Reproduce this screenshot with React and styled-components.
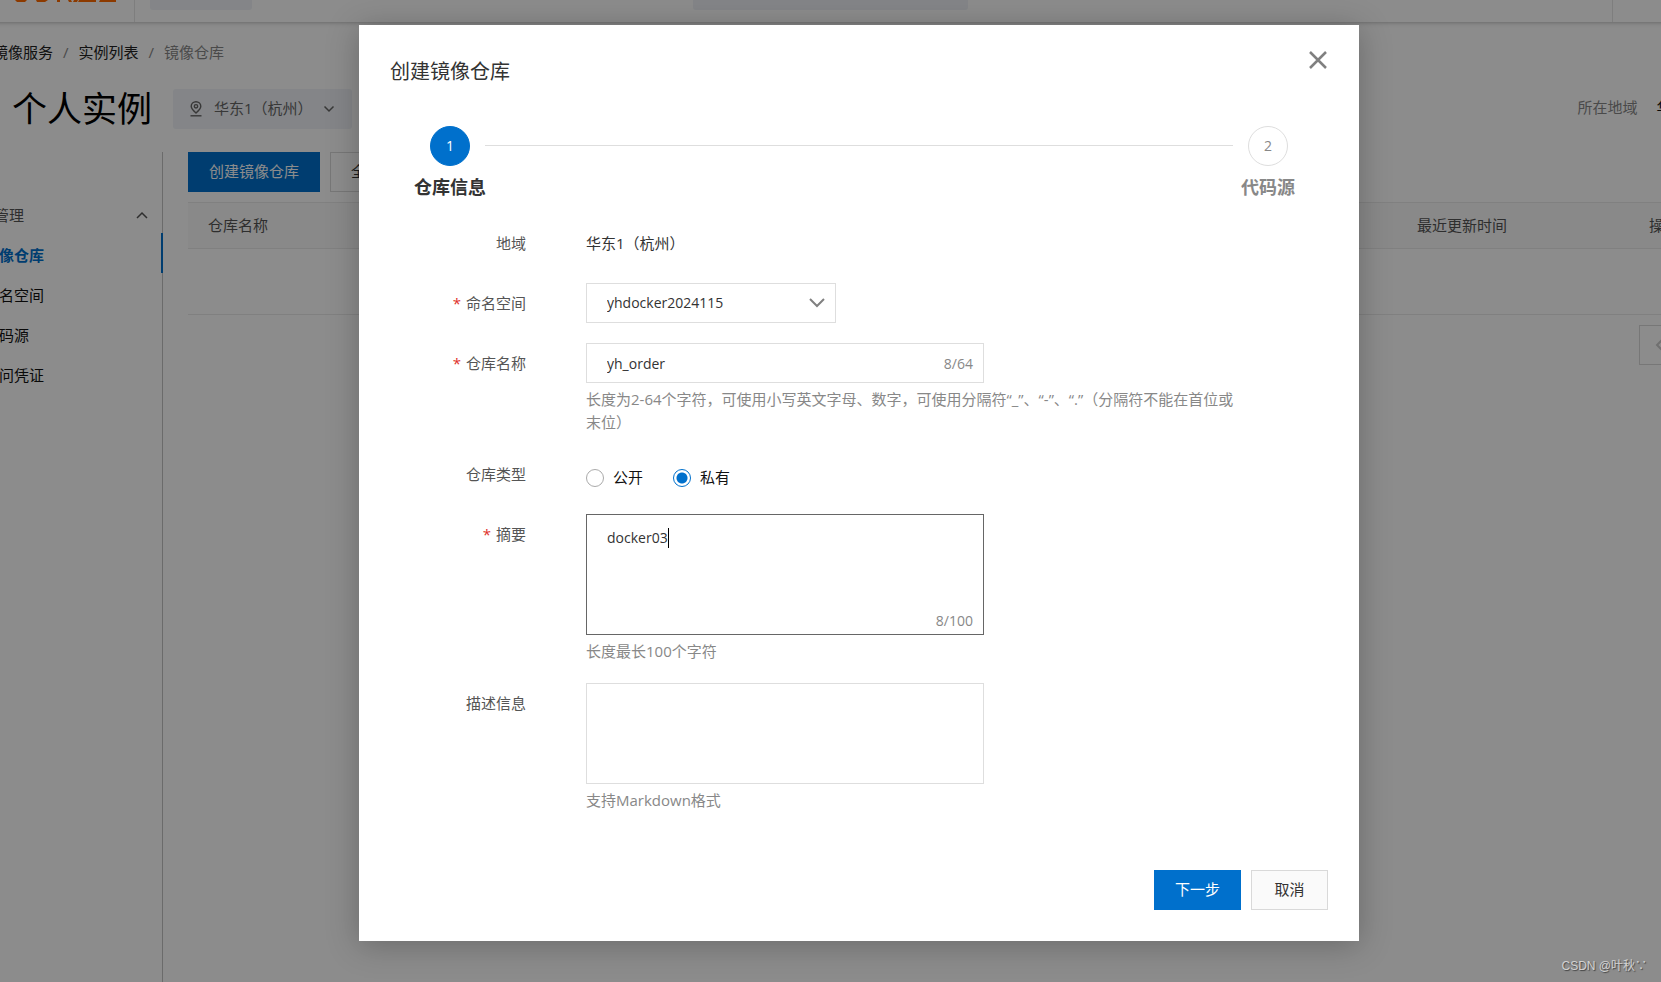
import React, { useState } from "react";
import styled, { createGlobalStyle, css } from "styled-components";

const GlobalStyle = createGlobalStyle`
  * {
    box-sizing: border-box;
  }
  body {
    margin: 0;
    overflow: hidden;
    background: #fff;
    color: #333;
    font-family: "Open Sans", "Noto Sans CJK SC", sans-serif;
    font-size: 15px;
    line-height: 23px;
    text-spacing-trim: space-all;
  }
  button, input, select, textarea {
    font: inherit;
    color: inherit;
  }
`;

/* console page */

const Viewport = styled.div`
  height: 100vh;
  overflow: hidden;
`;

// the console is wider than the window and is scrolled a little to the right
const Shell = styled.div`
  position: relative;
  display: flex;
  flex-direction: column;
  width: calc(100% + 171px);
  height: 100%;
  margin-left: -57px;
`;

const TopBar = styled.header`
  display: flex;
  flex: none;
  height: 22px;
  padding-left: 70px;
  box-shadow: 0 1px 4px rgba(0, 0, 0, 0.25);
`;

const Logo = styled.a`
  width: 122px;
  border-right: 1px solid #e6e6e6;
  svg {
    display: block;
  }
`;

const TopBox = styled.div`
  width: ${props => props.$width};
  height: 10px;
  margin-left: ${props => props.$left};
  border-radius: 0 0 3px 3px;
  background: #f0f3f7;
`;

const TopTools = styled.div`
  width: 163px;
  margin-left: auto;
  border-left: 1px solid #e6e6e6;
`;

const Breadcrumb = styled.nav`
  display: flex;
  flex: none;
  gap: 10px;
  margin-top: 19px;
  padding-left: 20px;
  color: #888;
  a {
    color: #222;
    text-decoration: none;
  }
`;

const TitleRow = styled.div`
  display: flex;
  flex: none;
  align-items: center;
  height: 40px;
  margin: 25px 20px 23px 69px;
`;

const PageTitle = styled.h1`
  margin: 0;
  color: #000;
  font-size: 35px;
  font-weight: 400;
  line-height: 40px;
`;

const RegionPicker = styled.label`
  display: flex;
  align-items: center;
  gap: 12px;
  width: 179px;
  height: 40px;
  margin-left: 21px;
  padding: 0 17px;
  border-radius: 3px;
  background: #f0f3f7;
  color: #666;
`;

const BareSelect = styled.select`
  flex: 1;
  min-width: 0;
  height: 100%;
  padding: 0 0 2px;
  border: 0;
  outline: 0;
  appearance: none;
  background: transparent;
`;

const RegionInfo = styled.dl`
  display: flex;
  gap: 19px;
  margin: 0 0 0 auto;
  padding-bottom: 4px;
  dt {
    color: #888;
  }
  dd {
    margin: 0;
    color: #111;
  }
`;

const Columns = styled.div`
  display: flex;
  flex: 1;
`;

const SideNav = styled.nav`
  flex: none;
  width: 220px;
  padding-top: 41px;
  border-right: 1px solid #c4c4c4;
`;

const NavGroup = styled.button`
  display: flex;
  align-items: center;
  justify-content: space-between;
  width: 100%;
  height: 40px;
  padding: 4px 14px 0 21px;
  border: 0;
  background: none;
  color: #555;
`;

const NavItem = styled.a`
  display: block;
  height: 40px;
  margin-right: -1px;
  padding: 11px 0 0 41px;
  color: #111;
  text-decoration: none;
  ${props => props.$active && css`
    border-right: 2px solid #0070cc;
    color: #0070cc;
    font-weight: 600;
  `}
`;

const Main = styled.main`
  flex: 1;
  padding: 0 20px 0 25px;
`;

const Toolbar = styled.div`
  display: flex;
  gap: 10px;
  margin-bottom: 10px;
`;

const Button = styled.button`
  min-width: 77px;
  height: 40px;
  padding: 0 20px 2px;
  border: 1px solid ${props => (props.$primary ? "#0070cc" : "#d9d9d9")};
  background: ${props => (props.$primary ? "#0070cc" : props.$fill || "#fff")};
  color: ${props => (props.$primary ? "#fff" : "#333")};
  white-space: nowrap;
`;

const RepoTable = styled.table`
  width: 100%;
  border-collapse: collapse;
  table-layout: fixed;
  th {
    height: 46px;
    padding: 0 20px;
    border: solid #e9e9e9;
    border-width: 1px 0;
    background: #f9f9f9;
    color: #555;
    font-weight: 400;
    text-align: left;
  }
  th:nth-last-child(2) {
    width: 232px;
  }
  th:last-child {
    width: 126px;
  }
  td {
    height: 66px;
    border-bottom: 1px solid #e9e9e9;
  }
`;

const Pager = styled.div`
  display: flex;
  justify-content: flex-end;
  margin-top: 10px;
`;

const PagerButton = styled.button`
  display: flex;
  flex: none;
  align-items: center;
  justify-content: center;
  width: 116px;
  height: 40px;
  padding: 0 74px 0 0;
  border: 1px solid #d9d9d9;
  background: #fff;
  color: #ccc;
`;

/* dialog */

const Overlay = styled.div`
  position: absolute;
  inset: 0;
  display: flex;
  align-items: flex-start;
  justify-content: center;
  padding-top: 25px;
  background: rgba(0, 0, 0, 0.45);
`;

const Dialog = styled.section`
  width: 1000px;
  padding: 31px;
  background: #fff;
  box-shadow: 0 4px 30px rgba(0, 0, 0, 0.25);
`;

const DialogHead = styled.header`
  display: flex;
  align-items: flex-start;
  justify-content: space-between;
  height: 70px;
`;

const DialogTitle = styled.h2`
  margin: 0;
  font-size: 20px;
  font-weight: 400;
  line-height: 32px;
`;

const CloseButton = styled.button`
  display: flex;
  margin-top: -6px;
  padding: 0;
  border: 0;
  background: none;
  color: #808080;
`;

const Steps = styled.ol`
  display: flex;
  height: 76px;
  margin: 0 0 21px;
  padding: 0 40px;
  list-style: none;
`;

const Step = styled.li`
  display: flex;
  flex-direction: column;
  align-items: center;
  width: 40px;
  color: ${props => (props.$current ? "#333" : "#888")};
  font-size: 18px;
  font-weight: 700;
  line-height: 24px;
  white-space: nowrap;
`;

const StepDot = styled.span`
  display: flex;
  flex: none;
  align-items: center;
  justify-content: center;
  width: 40px;
  height: 40px;
  margin-bottom: 9px;
  border: 1px solid ${props => (props.$current ? "#0070cc" : "#dedede")};
  border-radius: 50%;
  background: ${props => (props.$current ? "#0070cc" : "#fff")};
  color: ${props => (props.$current ? "#fff" : "#888")};
  font-size: 14px;
  font-weight: 400;
`;

const StepLine = styled.li`
  flex: 1;
  height: 1px;
  margin: 19px 15px 0;
  background: #dedede;
`;

const Form = styled.form`
  display: flex;
  flex-direction: column;
  gap: 20px;
  padding-right: 84px;
`;

const Row = styled.div`
  display: grid;
  grid-template-columns: 136px minmax(0, 1fr);
  column-gap: 60px;
`;

const RowLabel = styled.label`
  color: #555;
  line-height: 40px;
  text-align: right;
  ${props => props.$required && css`
    &::before {
      content: "*";
      margin-right: 5px;
      color: #e0302b;
    }
  `}
`;

const StaticText = styled.div`
  line-height: 40px;
`;

const Field = styled.div`
  position: relative;
  display: flex;
  align-items: center;
  width: ${props => props.$width || "398px"};
  max-width: 100%;
  height: ${props => props.$height || "40px"};
  border: 1px solid ${props => (props.$focused ? "#666" : "#dedede")};
  background: #fff;
  font-size: 14px;
`;

const SelectField = styled(Field)`
  padding: 0 10px 0 20px;
  color: #333;
  svg {
    color: #808080;
  }
`;

const TextInput = styled.input`
  flex: 1;
  min-width: 0;
  height: 100%;
  padding: 0 20px;
  border: 0;
  outline: 0;
  background: transparent;
`;

const TextArea = styled.textarea`
  flex: 1;
  min-width: 0;
  height: 100%;
  padding: 11px 20px;
  border: 0;
  outline: 0;
  resize: none;
  background: transparent;
`;

const Count = styled.span`
  padding-right: 10px;
  color: #888;
`;

const CornerCount = styled(Count)`
  position: absolute;
  right: 0;
  bottom: 2px;
`;

const Caret = styled.span`
  position: absolute;
  top: 13px;
  left: 81px;
  width: 1px;
  height: 20px;
  background: #000;
`;

const Hint = styled.p`
  margin: 5px 0 0;
  color: #888;
`;

const RadioGroup = styled.div`
  display: flex;
  gap: 30px;
  height: 40px;
  padding-top: 7px;
  color: #111;
`;

const RadioLabel = styled.label`
  display: flex;
  align-items: center;
  gap: 9px;
`;

const Radio = styled.input`
  width: 18px;
  height: 18px;
  margin: 0;
  border: 1px solid #aaa;
  border-radius: 50%;
  appearance: none;
  &:checked {
    border-color: #0070cc;
    background: radial-gradient(circle, #0070cc 5px, #fff 6px);
  }
`;

const DialogFoot = styled.footer`
  display: flex;
  justify-content: flex-end;
  gap: 10px;
  margin-top: 58px;
`;

const Watermark = styled.div`
  position: absolute;
  right: 14px;
  bottom: 6px;
  color: #d2d2d2;
  font-family: "Liberation Sans", "Noto Sans CJK SC", sans-serif;
  font-size: 12px;
  line-height: 20px;
  text-shadow: 1px 1px 1px #444;
`;

const Chevron = ({ size, height, stroke = 2, d }) => (
  <svg width={size} height={height} viewBox={`0 0 ${size} ${height}`} fill="none" stroke="currentColor" strokeWidth={stroke}>
    <path d={d} />
  </svg>
);

const LogoMark = () => (
  <svg width="50" height="4" viewBox="0 0 50 4" overflow="visible" fill="#ff6a00">
    <path d="M2 0h12l-2 2H4zM23 0h12l-3 2h-8zM44 0h3v2h-3zM55 0h3l1 2h-3zM61 0h4l-1 2h-4zM66 0h17v2H65zM87 0h16v2H86z" />
  </svg>
);

const PinIcon = () => (
  <svg width="12" height="16" viewBox="0 0 12 16" fill="none" stroke="currentColor" strokeWidth="1.4">
    <path d="M6 12C3 9.300 1.200 7.600 1.200 5.200a4.800 4.500 0 0 1 9.600 0C10.800 7.600 9 9.300 6 12z" />
    <circle cx="6" cy="5.300" r="1.700" />
    <path d="M0.500 14.800h11" />
  </svg>
);

const NAV = ["镜像仓库", "命名空间", "代码源", "访问凭证"];
const COLUMNS = ["仓库名称", "命名空间", "仓库状态", "仓库类型", "最近更新时间", "操作"];
const TYPES = ["公开", "私有"];

const App = () => {
  const [name, setName] = useState("yh_order");
  const [summary, setSummary] = useState("docker03");
  const [type, setType] = useState("私有");

  return (
    <Viewport>
      <GlobalStyle />
      <Shell>
        <TopBar>
          <Logo href="#" aria-label="阿里云">
            <LogoMark />
          </Logo>
          <TopBox $width="102px" $left="15px" />
          <TopBox $width="275px" $left="441px" />
          <TopTools />
        </TopBar>

        <Breadcrumb>
          <a href="#">容器镜像服务</a>
          <span>/</span>
          <a href="#">实例列表</a>
          <span>/</span>
          <span>镜像仓库</span>
        </Breadcrumb>

        <TitleRow>
          <PageTitle>个人实例</PageTitle>
          <RegionPicker>
            <PinIcon />
            <BareSelect aria-label="地域">
              <option>华东1（杭州）</option>
            </BareSelect>
            <Chevron size={12} height={8} d="M1.500 1.500L6 6l4.500-4.500" stroke={1.5} />
          </RegionPicker>
          <RegionInfo>
            <dt>所在地域</dt>
            <dd>华东1（杭州）</dd>
          </RegionInfo>
        </TitleRow>

        <Columns>
          <SideNav>
            <NavGroup>
              仓库管理
              <Chevron size={12} height={8} d="M1 7l5-5 5 5" stroke={1.5} />
            </NavGroup>
            {NAV.map((item, i) => (
              <NavItem key={item} href="#" $active={i === 0}>{item}</NavItem>
            ))}
          </SideNav>
          <Main>
            <Toolbar>
              <Button $primary>创建镜像仓库</Button>
              <Button>全部命名空间</Button>
            </Toolbar>
            <RepoTable>
              <thead>
                <tr>
                  {COLUMNS.map(column => <th key={column}>{column}</th>)}
                </tr>
              </thead>
              <tbody>
                <tr>
                  <td colSpan={COLUMNS.length} />
                </tr>
              </tbody>
            </RepoTable>
            <Pager>
              <PagerButton aria-label="上一页" disabled>
                <Chevron size={10} height={16} d="M8 2L2 8l6 6" />
              </PagerButton>
            </Pager>
          </Main>
        </Columns>

        <Overlay>
          <Dialog role="dialog" aria-labelledby="dialog-title">
            <DialogHead>
              <DialogTitle id="dialog-title">创建镜像仓库</DialogTitle>
              <CloseButton aria-label="关闭">
                <svg width="20" height="20" viewBox="0 0 20 20" fill="none" stroke="currentColor" strokeWidth="2.500">
                  <path d="M2 2l16 16M18 2L2 18" />
                </svg>
              </CloseButton>
            </DialogHead>

            <Steps>
              <Step $current>
                <StepDot $current>1</StepDot>
                仓库信息
              </Step>
              <StepLine aria-hidden="true" />
              <Step>
                <StepDot>2</StepDot>
                代码源
              </Step>
            </Steps>

            <Form id="repo-form">
              <Row>
                <RowLabel as="span">地域</RowLabel>
                <StaticText>华东1（杭州）</StaticText>
              </Row>
              <Row>
                <RowLabel htmlFor="namespace" $required>命名空间</RowLabel>
                <SelectField $width="250px">
                  <BareSelect id="namespace">
                    <option>yhdocker2024115</option>
                  </BareSelect>
                  <Chevron size={16} height={10} d="M1 1l7 7 7-7" />
                </SelectField>
              </Row>
              <Row>
                <RowLabel htmlFor="name" $required>仓库名称</RowLabel>
                <div>
                  <Field>
                    <TextInput id="name" value={name} maxLength={64} onChange={e => setName(e.target.value)} />
                    <Count>{name.length}/64</Count>
                  </Field>
                  <Hint>长度为2-64个字符，可使用小写英文字母、数字，可使用分隔符“_”、“-”、“.”（分隔符不能在首位或末位）</Hint>
                </div>
              </Row>
              <Row>
                <RowLabel as="span">仓库类型</RowLabel>
                <RadioGroup role="radiogroup" aria-label="仓库类型">
                  {TYPES.map(item => (
                    <RadioLabel key={item}>
                      <Radio type="radio" name="type" checked={type === item} onChange={() => setType(item)} />
                      {item}
                    </RadioLabel>
                  ))}
                </RadioGroup>
              </Row>
              <Row>
                <RowLabel htmlFor="summary" $required>摘要</RowLabel>
                <div>
                  <Field $height="121px" $focused>
                    <TextArea id="summary" value={summary} maxLength={100} onChange={e => setSummary(e.target.value)} />
                    <Caret />
                    <CornerCount>{summary.length}/100</CornerCount>
                  </Field>
                  <Hint>长度最长100个字符</Hint>
                </div>
              </Row>
              <Row>
                <RowLabel htmlFor="detail">描述信息</RowLabel>
                <div>
                  <Field $height="101px">
                    <TextArea id="detail" />
                  </Field>
                  <Hint>支持Markdown格式</Hint>
                </div>
              </Row>
            </Form>

            <DialogFoot>
              <Button $primary form="repo-form" type="button">下一步</Button>
              <Button $fill="#fafafa" type="button">取消</Button>
            </DialogFoot>
          </Dialog>
        </Overlay>
      </Shell>
      <Watermark>CSDN @叶秋∵</Watermark>
    </Viewport>
  );
};

export default App;
